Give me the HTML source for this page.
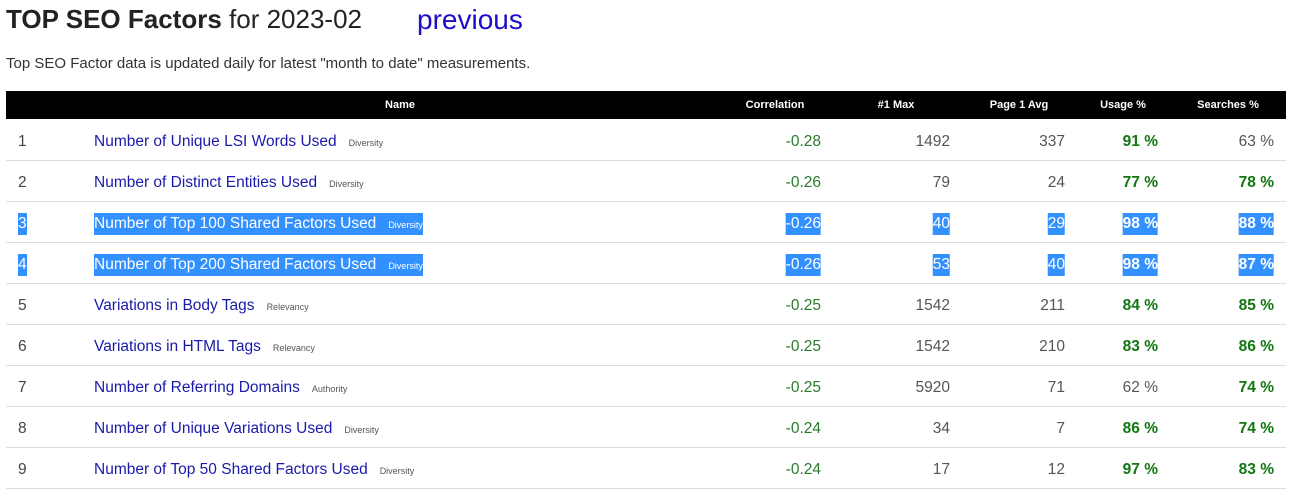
<!DOCTYPE html>
<html><head><meta charset="utf-8"><style>
body{margin:0;width:1296px;height:485px;background:#fff;font-family:"Liberation Sans",sans-serif;color:#333;overflow:hidden;position:relative}
.a{position:absolute;white-space:nowrap}
h1{position:absolute;left:6px;top:4px;margin:0;font-size:26px;font-weight:normal;color:#222;white-space:nowrap}
h1 b{font-weight:bold}
.prev{position:absolute;left:417px;top:4px;font-size:28px;color:#1a0dcc}
.sub{left:6px;top:55px;font-size:15px;color:#333}
.hdr{position:absolute;left:6px;top:91px;width:1280px;height:28px;background:#000}
.hdr span{position:absolute;top:8px;color:#fff;font-size:11px;font-weight:bold;transform:translateX(-50%);white-space:nowrap}
.row{position:absolute;left:6px;width:1280px;height:41px;border-bottom:1px solid #ddd}
.row span{position:absolute;top:12px;font-size:15.5px;white-space:nowrap;padding:2px 0}
.n{left:12px;color:#444}
.nm{left:88px;color:#1a1aaa}
.nm small{font-size:9px;color:#555;margin-left:12px}
.r{text-align:right;transform:translateX(-100%)}
.g{color:#2a7a2a}
.gb{color:#117711;font-weight:bold}
.sel span{background:#3390ff;color:#fff!important}
.sel .nm small{color:#fff}
</style></head><body>
<h1><b>TOP SEO Factors</b> for 2023-02</h1>
<div class="prev">previous</div>
<div class="a sub">Top SEO Factor data is updated daily for latest "month to date" measurements.</div>
<div class="hdr">
<span style="left:394px">Name</span>
<span style="left:769px">Correlation</span>
<span style="left:890px">#1 Max</span>
<span style="left:1013px">Page 1 Avg</span>
<span style="left:1117px">Usage %</span>
<span style="left:1222px">Searches %</span>
</div>
<div id="rows"></div>
<script>
var d=[
["1","Number of Unique LSI Words Used","Diversity","-0.28","1492","337","91 %",1,"63 %",0],
["2","Number of Distinct Entities Used","Diversity","-0.26","79","24","77 %",1,"78 %",1],
["3","Number of Top 100 Shared Factors Used","Diversity","-0.26","40","29","98 %",1,"88 %",1,1],
["4","Number of Top 200 Shared Factors Used","Diversity","-0.26","53","40","98 %",1,"87 %",1,1],
["5","Variations in Body Tags","Relevancy","-0.25","1542","211","84 %",1,"85 %",1],
["6","Variations in HTML Tags","Relevancy","-0.25","1542","210","83 %",1,"86 %",1],
["7","Number of Referring Domains","Authority","-0.25","5920","71","62 %",0,"74 %",1],
["8","Number of Unique Variations Used","Diversity","-0.24","34","7","86 %",1,"74 %",1],
["9","Number of Top 50 Shared Factors Used","Diversity","-0.24","17","12","97 %",1,"83 %",1]];
var h="";
d.forEach(function(r,i){
h+='<div class="row'+(r[10]?' sel':'')+'" style="top:'+(119+i*41)+'px">'+
'<span class="n">'+r[0]+'</span>'+
'<span class="nm">'+r[1]+'<small>'+r[2]+'</small></span>'+
'<span class="r g" style="left:815px">'+r[3]+'</span>'+
'<span class="r" style="left:944px;color:#555">'+r[4]+'</span>'+
'<span class="r" style="left:1059px;color:#555">'+r[5]+'</span>'+
'<span class="r '+(r[7]?'gb':'')+'" style="left:1152px;'+(r[7]?'':'color:#555')+'">'+r[6]+'</span>'+
'<span class="r '+(r[9]?'gb':'')+'" style="left:1268px;'+(r[9]?'':'color:#555')+'">'+r[8]+'</span></div>';
});
document.getElementById("rows").innerHTML=h;
</script>
</body></html>
